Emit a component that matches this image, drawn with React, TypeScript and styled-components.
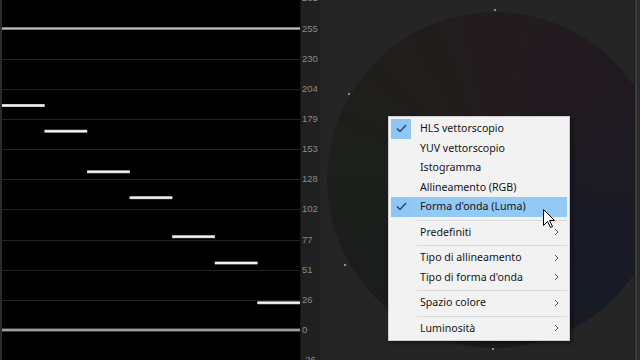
import React from "react";
import styled, { createGlobalStyle } from "styled-components";

const Global = createGlobalStyle`
  html, body { margin: 0; padding: 0; background: #252525; }
  body { width: 640px; height: 360px; overflow: hidden; font-family: "Liberation Sans", Arial, sans-serif; }
  #root { width: 640px; height: 360px; }
`;

const Screen = styled.div`
  position: relative;
  display: flex;
  width: 640px;
  height: 360px;
  overflow: hidden;
  background: #252525;
`;

const WavePanel = styled.div`
  position: relative;
  width: 298px;
  height: 360px;
  border-left: 2px solid #2c2c2c;
  background: #000;
  flex: none;
`;

const Axis = styled.div`
  position: relative;
  width: 19px;
  height: 360px;
  border-left: 1px solid #151515;
  background: #202020;
  flex: none;
`;

const AxisLabel = styled.span`
  position: absolute;
  left: 1px;
  transform: translateY(-50%);
  font-family: "Liberation Sans", Arial, sans-serif;
  font-size: 9.5px;
  line-height: 10px;
  color: #8a8a8a;
  white-space: nowrap;
`;

const ScopePanel = styled.div`
  position: relative;
  width: 314px;
  height: 360px;
  background: #252525;
  overflow: hidden;
  flex: none;
`;

const ScopeDisc = styled.div`
  position: absolute;
  left: 7px;
  top: 12px;
  width: 336px;
  height: 336px;
  border-radius: 50%;
  background: conic-gradient(
    from 0deg,
    #221b1e 0deg,
    #201a21 60deg,
    #1b1a24 100deg,
    #171b25 140deg,
    #191b20 180deg,
    #1a1d1b 235deg,
    #1c1f1a 280deg,
    #201d1b 320deg,
    #221b1e 360deg
  );
`;

const ScopeMarks = styled.svg`
  position: absolute;
  left: 0;
  top: 0;
`;

const RightEdge = styled.div`
  width: 6px;
  height: 360px;
  flex: none;
  border-left: 1px solid #1a1a1a;
  background: linear-gradient(to right, #3b3b3b 0, #3b3b3b 2px, #2b2b2b 2px);
`;

const Menu = styled.div`
  position: absolute;
  left: 388px;
  top: 116px;
  width: 176px;
  padding: 2px;
  background: #f2f2f2;
  border: 1px solid #cfcfcf;
  box-shadow: 2px 2px 4px rgba(0, 0, 0, 0.45);
  font-family: "Noto Sans", "Open Sans", sans-serif;
  font-size: 10.6px;
  color: #141414;
`;

const Item = styled.div<{ $hover?: boolean }>`
  position: relative;
  display: flex;
  align-items: center;
  height: 19.5px;
  padding-left: 29px;
  padding-right: 8px;
  background: ${(p) => (p.$hover ? "#93c9f5" : "transparent")};
`;

const Label = styled.span`
  flex: 1;
  white-space: nowrap;
  line-height: 19.5px;
`;

const CheckBox = styled.span`
  position: absolute;
  left: 0;
  top: 0;
  width: 20px;
  height: 19.5px;
  display: flex;
  align-items: center;
  justify-content: center;
  background: #90c6f4;
`;

const Arrow = styled.span`
  width: 6px;
  display: flex;
  align-items: center;
  justify-content: center;
`;

const Separator = styled.div`
  height: 1px;
  margin: 3px 0 2px 26px;
  background: #d9d9d9;
`;

const Cursor = styled.svg`
  position: absolute;
  left: 543px;
  top: 209px;
`;

const Check = () => (
  <svg width="11" height="9" viewBox="0 0 11 9">
    <path d="M1 4.5 L4 7.5 L10 1" fill="none" stroke="#1d4e7c" strokeWidth="1.5" />
  </svg>
);

const Chevron = () => (
  <svg width="5" height="8" viewBox="0 0 5 8">
    <path d="M1 1 L4 4 L1 7" fill="none" stroke="#555" strokeWidth="1" />
  </svg>
);

type Entry =
  | { kind: "item"; label: string; checked?: boolean; hover?: boolean; sub?: boolean }
  | { kind: "sep" };

const entries: Entry[] = [
  { kind: "item", label: "HLS vettorscopio", checked: true },
  { kind: "item", label: "YUV vettorscopio" },
  { kind: "item", label: "Istogramma" },
  { kind: "item", label: "Allineamento (RGB)" },
  { kind: "item", label: "Forma d'onda (Luma)", checked: true, hover: true },
  { kind: "sep" },
  { kind: "item", label: "Predefiniti", sub: true },
  { kind: "sep" },
  { kind: "item", label: "Tipo di allineamento", sub: true },
  { kind: "item", label: "Tipo di forma d'onda", sub: true },
  { kind: "sep" },
  { kind: "item", label: "Spazio colore", sub: true },
  { kind: "sep" },
  { kind: "item", label: "Luminosità", sub: true },
];

const STEP = 30.15;
const ZERO_Y = 330;
const labels = ["-26", "0", "26", "51", "77", "102", "128", "153", "179", "204", "230", "255", "281"];

const steps = [105.5, 131.2, 171.8, 197.7, 236.7, 263, 302.8];

const Waveform = () => {
  const w = 298;
  const segW = w / 7;
  const grid = [];
  for (let i = 1; i <= 9; i++) {
    const y = Math.round(ZERO_Y - i * STEP) + 0.5;
    grid.push(<line key={i} x1={0} x2={w} y1={y} y2={y} stroke="#232323" strokeWidth={1} />);
  }
  return (
    <svg width={w} height={360} viewBox={`0 0 ${w} 360`} style={{ display: "block" }}>
      {grid}
      {[28.5, 330].map((y) => (
        <g key={y}>
          <rect x={0} y={y - 1.5} width={w} height={3} fill="#7d7d7d" />
          <rect x={0} y={y - 0.5} width={w} height={1} fill="#bdbdbd" />
        </g>
      ))}
      {steps.map((y, i) => (
        <g key={i}>
          <rect x={i * segW} y={y - 1.5} width={segW} height={3} fill="#a8a8a8" />
          <rect x={i * segW} y={y - 1} width={segW} height={2} fill="#f2f2f2" />
        </g>
      ))}
    </svg>
  );
};

export default function App() {
  return (
    <>
      <Global />
      <Screen>
        <WavePanel>
          <Waveform />
        </WavePanel>
        <Axis>
          {labels.map((l, i) => (
            <AxisLabel key={l} style={{ top: ZERO_Y - (i - 1) * STEP }}>
              {l}
            </AxisLabel>
          ))}
        </Axis>
        <ScopePanel>
          <ScopeDisc />
          <ScopeMarks width={314} height={360} viewBox="0 0 314 360">
            {[
              [175, 10],
              [29, 94],
              [25, 265],
              [173, 349],
            ].map(([x, y], i) => (
              <rect key={i} x={x - 1} y={y - 1} width={2} height={2} fill="#8f8f8f" />
            ))}
          </ScopeMarks>
        </ScopePanel>
        <RightEdge />
        <Menu>
          {entries.map((e, i) =>
            e.kind === "sep" ? (
              <Separator key={i} />
            ) : (
              <Item key={i} $hover={e.hover}>
                {e.checked && (
                  <CheckBox>
                    <Check />
                  </CheckBox>
                )}
                <Label>{e.label}</Label>
                {e.sub && (
                  <Arrow>
                    <Chevron />
                  </Arrow>
                )}
              </Item>
            )
          )}
        </Menu>
        <Cursor width="12" height="19" viewBox="0 0 12 19">
          <path
            d="M0.5 0.5 L0.5 16.5 L4.5 12.5 L7.5 18.5 L9.5 17.5 L6.5 11.5 L11.5 11.5 Z"
            fill="#fff"
            stroke="#000"
            strokeWidth="1"
            strokeLinejoin="miter"
          />
        </Cursor>
      </Screen>
    </>
  );
}
